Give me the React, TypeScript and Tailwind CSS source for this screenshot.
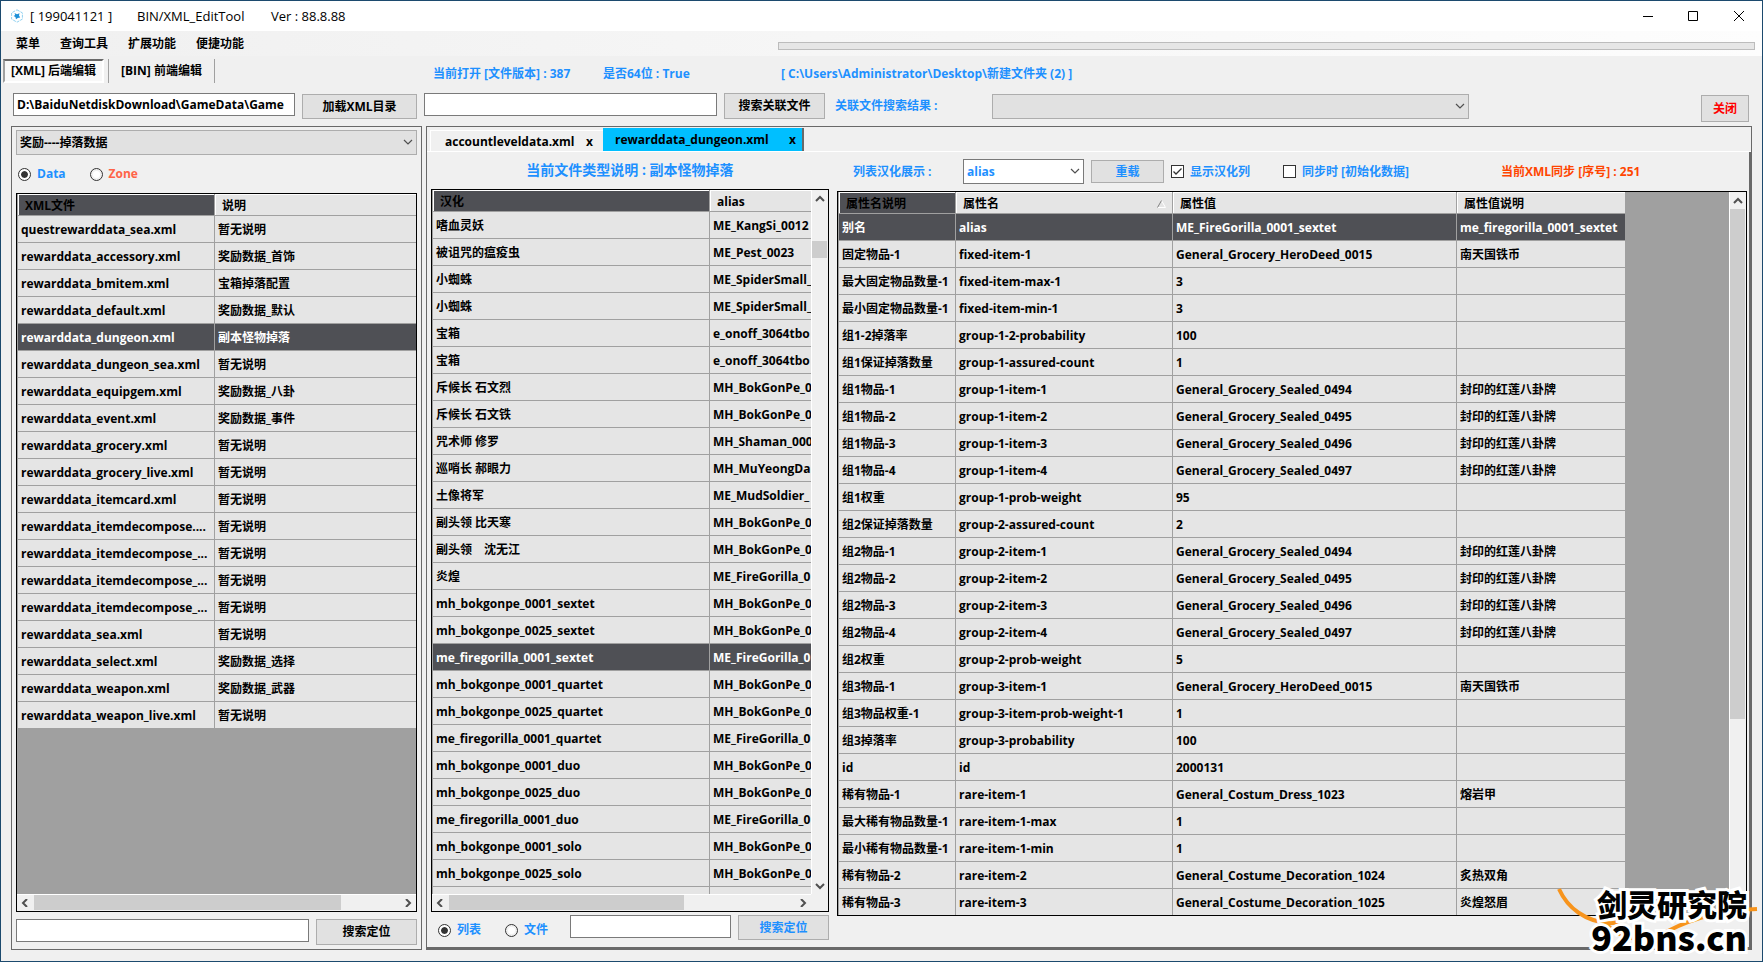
import React, { useState } from 'react';

const fileRows = [
  ['questrewarddata_sea.xml', '暂无说明'],
  ['rewarddata_accessory.xml', '奖励数据_首饰'],
  ['rewarddata_bmitem.xml', '宝箱掉落配置'],
  ['rewarddata_default.xml', '奖励数据_默认'],
  ['rewarddata_dungeon.xml', '副本怪物掉落'],
  ['rewarddata_dungeon_sea.xml', '暂无说明'],
  ['rewarddata_equipgem.xml', '奖励数据_八卦'],
  ['rewarddata_event.xml', '奖励数据_事件'],
  ['rewarddata_grocery.xml', '暂无说明'],
  ['rewarddata_grocery_live.xml', '暂无说明'],
  ['rewarddata_itemcard.xml', '暂无说明'],
  ['rewarddata_itemdecompose....', '暂无说明'],
  ['rewarddata_itemdecompose_...', '暂无说明'],
  ['rewarddata_itemdecompose_...', '暂无说明'],
  ['rewarddata_itemdecompose_...', '暂无说明'],
  ['rewarddata_sea.xml', '暂无说明'],
  ['rewarddata_select.xml', '奖励数据_选择'],
  ['rewarddata_weapon.xml', '奖励数据_武器'],
  ['rewarddata_weapon_live.xml', '暂无说明'],
];

const aliasRows = [
  ['嗜血灵妖', 'ME_KangSi_0012'],
  ['被诅咒的瘟疫虫', 'ME_Pest_0023'],
  ['小蜘蛛', 'ME_SpiderSmall_'],
  ['小蜘蛛', 'ME_SpiderSmall_'],
  ['宝箱', 'e_onoff_3064tbo'],
  ['宝箱', 'e_onoff_3064tbo'],
  ['斥候长 石文烈', 'MH_BokGonPe_0'],
  ['斥候长 石文铁', 'MH_BokGonPe_0'],
  ['咒术师 修罗', 'MH_Shaman_000'],
  ['巡哨长 郝眼力', 'MH_MuYeongDa'],
  ['土像将军', 'ME_MudSoldier_'],
  ['副头领 比天寒', 'MH_BokGonPe_0'],
  ['副头领　沈无江', 'MH_BokGonPe_0'],
  ['炎煌', 'ME_FireGorilla_0'],
  ['mh_bokgonpe_0001_sextet', 'MH_BokGonPe_0'],
  ['mh_bokgonpe_0025_sextet', 'MH_BokGonPe_0'],
  ['me_firegorilla_0001_sextet', 'ME_FireGorilla_0'],
  ['mh_bokgonpe_0001_quartet', 'MH_BokGonPe_0'],
  ['mh_bokgonpe_0025_quartet', 'MH_BokGonPe_0'],
  ['me_firegorilla_0001_quartet', 'ME_FireGorilla_0'],
  ['mh_bokgonpe_0001_duo', 'MH_BokGonPe_0'],
  ['mh_bokgonpe_0025_duo', 'MH_BokGonPe_0'],
  ['me_firegorilla_0001_duo', 'ME_FireGorilla_0'],
  ['mh_bokgonpe_0001_solo', 'MH_BokGonPe_0'],
  ['mh_bokgonpe_0025_solo', 'MH_BokGonPe_0'],
  ['', ''],
];

const attrRows = [
  ['别名', 'alias', 'ME_FireGorilla_0001_sextet', 'me_firegorilla_0001_sextet'],
  ['固定物品-1', 'fixed-item-1', 'General_Grocery_HeroDeed_0015', '南天国铁币'],
  ['最大固定物品数量-1', 'fixed-item-max-1', '3', ''],
  ['最小固定物品数量-1', 'fixed-item-min-1', '3', ''],
  ['组1-2掉落率', 'group-1-2-probability', '100', ''],
  ['组1保证掉落数量', 'group-1-assured-count', '1', ''],
  ['组1物品-1', 'group-1-item-1', 'General_Grocery_Sealed_0494', '封印的红莲八卦牌'],
  ['组1物品-2', 'group-1-item-2', 'General_Grocery_Sealed_0495', '封印的红莲八卦牌'],
  ['组1物品-3', 'group-1-item-3', 'General_Grocery_Sealed_0496', '封印的红莲八卦牌'],
  ['组1物品-4', 'group-1-item-4', 'General_Grocery_Sealed_0497', '封印的红莲八卦牌'],
  ['组1权重', 'group-1-prob-weight', '95', ''],
  ['组2保证掉落数量', 'group-2-assured-count', '2', ''],
  ['组2物品-1', 'group-2-item-1', 'General_Grocery_Sealed_0494', '封印的红莲八卦牌'],
  ['组2物品-2', 'group-2-item-2', 'General_Grocery_Sealed_0495', '封印的红莲八卦牌'],
  ['组2物品-3', 'group-2-item-3', 'General_Grocery_Sealed_0496', '封印的红莲八卦牌'],
  ['组2物品-4', 'group-2-item-4', 'General_Grocery_Sealed_0497', '封印的红莲八卦牌'],
  ['组2权重', 'group-2-prob-weight', '5', ''],
  ['组3物品-1', 'group-3-item-1', 'General_Grocery_HeroDeed_0015', '南天国铁币'],
  ['组3物品权重-1', 'group-3-item-prob-weight-1', '1', ''],
  ['组3掉落率', 'group-3-probability', '100', ''],
  ['id', 'id', '2000131', ''],
  ['稀有物品-1', 'rare-item-1', 'General_Costum_Dress_1023', '熔岩甲'],
  ['最大稀有物品数量-1', 'rare-item-1-max', '1', ''],
  ['最小稀有物品数量-1', 'rare-item-1-min', '1', ''],
  ['稀有物品-2', 'rare-item-2', 'General_Costume_Decoration_1024', '炙热双角'],
  ['稀有物品-3', 'rare-item-3', 'General_Costume_Decoration_1025', '炎煌怒眉'],
];

interface GridProps {
  label: string;
  headers: string[];
  widths: string[];
  rows: string[][];
  initial: number;
  sorted?: number;
}

const Grid: React.FC<GridProps> = ({ label, headers, widths, rows, initial, sorted }) => {
  const [selected, setSelected] = useState(initial);

  return (
    <table aria-label={label} className="w-max table-fixed border-separate border-spacing-0 border-l border-[#a0a0a0] text-left">
      <thead>
        <tr>
          {headers.map((h, i) => (
            <th
              key={h}
              className={`${widths[i]} h-[22px] border-r border-b border-[#a0a0a0] p-0 font-bold ${i === 0 ? 'bg-[#4f5055]' : 'bg-[#e5e5e5]'}`}
            >
              <div className="flex h-[21px] items-center justify-between border-t border-l border-white px-1.5 pt-0.5">
                {h}
                {sorted === i && (
                  <svg width="9" height="8" viewBox="0 0 9 8" fill="none">
                    <path d="M4.5 0.5L8.5 7.5H0.5" stroke="#fff" />
                    <path d="M4.5 0.5L0.5 7.5" stroke="#808080" />
                  </svg>
                )}
              </div>
            </th>
          ))}
        </tr>
      </thead>
      <tbody>
        {rows.map((row, r) => (
          <tr
            key={r}
            onClick={() => setSelected(r)}
            className={r === selected ? 'bg-[#4f5055] text-white' : 'bg-[#e5e5e5]'}
          >
            {row.map((cell, i) => (
              <td key={i} className="h-[27px] overflow-hidden border-r border-b border-[#a0a0a0] px-[3px] pt-0.5 pb-0 whitespace-pre">
                {cell}
              </td>
            ))}
          </tr>
        ))}
      </tbody>
    </table>
  );
};

const arrows = {
  up: 'M1 6L5 2L9 6',
  down: 'M1 2L5 6L9 2',
  left: 'M6 0L2 4L6 8',
  right: 'M3 0L7 4L3 8',
};

const Arrow: React.FC<{ dir: keyof typeof arrows }> = ({ dir }) => (
  <svg width="10" height="8" viewBox="0 0 10 8" fill="none" stroke="#505050" strokeWidth="2">
    <path d={arrows[dir]} />
  </svg>
);

const HScroll: React.FC<{ thumb: string }> = ({ thumb }) => (
  <div className="flex h-[17px] shrink-0 items-stretch border-t border-white bg-[#f0f0f0]">
    <button aria-label="向左滚动" className="flex w-[17px] shrink-0 items-center justify-center"><Arrow dir="left" /></button>
    <div className="min-w-0 flex-1">
      <div className={`${thumb} h-[15px] bg-[#cdcdcd]`} />
    </div>
    <button aria-label="向右滚动" className="flex w-[17px] shrink-0 items-center justify-center"><Arrow dir="right" /></button>
  </div>
);

interface ComboProps {
  id: string;
  label: string;
  options: string[];
  className: string;
}

const Combo: React.FC<ComboProps> = ({ id, label, options, className }) => (
  <div className="relative flex">
    <select
      id={id}
      aria-label={label}
      className={`h-[25px] w-full appearance-none rounded-none border pt-px pl-[3px] font-bold outline-none ${className}`}
    >
      {options.map(o => <option key={o}>{o}</option>)}
    </select>
    <svg className="pointer-events-none absolute top-[9px] right-1" width="10" height="7" viewBox="0 0 10 7" fill="none" stroke="#505050" strokeWidth="1.2">
      <path d="M1 1L5 5L9 1" />
    </svg>
  </div>
);

interface RadioProps {
  name: string;
  text: string;
  color: string;
  checked: boolean;
  onChange: () => void;
}

const Radio: React.FC<RadioProps> = ({ name, text, color, checked, onChange }) => (
  <label className={`flex items-center gap-1.5 ${color}`}>
    <input
      type="radio"
      name={name}
      checked={checked}
      onChange={onChange}
      className="size-[13px] appearance-none rounded-full border border-[#333] bg-white bg-clip-content p-0.5 checked:bg-[#333] checked:shadow-[inset_0_0_0_2px_#fff]"
    />
    {text}
  </label>
);

const CheckBox: React.FC<{ text: string; initial: boolean }> = ({ text, initial }) => {
  const [on, setOn] = useState(initial);
  return (
    <label className="relative flex items-center gap-1.5">
      <input
        type="checkbox"
        checked={on}
        onChange={() => setOn(!on)}
        className="size-[13px] appearance-none border border-[#333] bg-white"
      />
      {on && (
        <svg className="pointer-events-none absolute left-0.5" width="9" height="9" viewBox="0 0 9 9" fill="none" stroke="#333" strokeWidth="1.3">
          <path d="M0.5 4.5L3 7L8.5 1.5" />
        </svg>
      )}
      {text}
    </label>
  );
};

const btn = 'flex items-center justify-center border border-[#adadad] bg-[#e1e1e1] font-bold';
const box = 'h-[23px] rounded-none border border-[#7a7a7a] bg-white px-[3px] font-bold outline-none';

const App: React.FC = () => {
  const [source, setSource] = useState('Data');
  const [mode, setMode] = useState('列表');

  return (
    <div className="relative flex h-screen min-h-[600px] flex-col overflow-hidden border border-[#1c4a6e] bg-[#f0f0f0] font-['Open_Sans','Noto_Sans_CJK_SC',sans-serif] text-[12px] leading-4 font-bold text-black">
      {/* Title bar */}
      <header className="flex h-[30px] shrink-0 items-center bg-white pl-[9px] text-[13px] font-normal">
        <svg width="14" height="14" viewBox="0 0 14 14" fill="none">
          <path d="M7 0.8L12.4 3.9V10.1L7 13.2L1.6 10.1V3.9Z" stroke="#8fd0f0" strokeDasharray="3 1" />
          <path d="M4.5 4L7 5.2L9.5 4.2L9 6.6L10.2 8.4L7.8 9L6 10.2L5.4 8L3.6 7L5.2 6Z" fill="#1e90d8" />
        </svg>
        <span className="ml-1.5 w-[107px]">[ 199041121 ]</span>
        <h1 className="w-[134px]">BIN/XML_EditTool</h1>
        <span>Ver : 88.8.88</span>
        <div className="ml-auto flex h-full items-center">
          <button aria-label="最小化" className="flex h-full w-[45px] items-center justify-center">
            <svg width="10" height="10" stroke="#000"><path d="M0 5.5H10" /></svg>
          </button>
          <button aria-label="最大化" className="flex h-full w-[45px] items-center justify-center">
            <svg width="10" height="10" fill="none" stroke="#000"><path d="M0.5 0.5H9.5V9.5H0.5Z" /></svg>
          </button>
          <button aria-label="关闭窗口" className="flex h-full w-[47px] items-center justify-center">
            <svg width="10" height="10" stroke="#000"><path d="M0 0L10 10M10 0L0 10" /></svg>
          </button>
        </div>
      </header>

      {/* Menu */}
      <nav className="flex h-[25px] shrink-0 items-center bg-linear-to-r from-[#f0f0f0] to-[#fdfdfd] pr-[7px] pl-[15px]">
        <div className="flex w-[762px] shrink-0 gap-5">
          <button>菜单</button>
          <button>查询工具</button>
          <button>扩展功能</button>
          <button>便捷功能</button>
        </div>
        <div role="progressbar" aria-label="进度" className="mt-1 h-2 flex-1 border border-[#bcbcbc] bg-[#e6e6e6]" />
      </nav>

      {/* Mode switch + status */}
      <div className="flex h-[37px] shrink-0 items-start pt-[3px] pl-[2px] text-[#1e90ff]">
        <button className="h-6 w-[101px] border-2 border-t-[#696969] border-r-white border-b-white border-l-[#a0a0a0] bg-[#f8f8f8] text-black">[XML] 后端编辑</button>
        <div className="ml-1 h-6 w-px bg-[#a0a0a0]" />
        <button className="h-6 w-[105px] text-black">[BIN] 前端编辑</button>
        <div className="h-6 w-px bg-[#a0a0a0]" />
        <span className="ml-[218px] w-[170px] pt-[7px]">当前打开 [文件版本] : 387</span>
        <span className="w-[178px] pt-[7px]">是否64位 : True</span>
        <span className="pt-[7px]">[ C:\Users\Administrator\Desktop\新建文件夹 (2) ]</span>
      </div>

      <div className="flex h-[33px] shrink-0 items-start pr-[13px] pl-3">
        <input aria-label="XML目录" className={`${box} w-[282px]`} defaultValue="D:\BaiduNetdiskDownload\GameData\Game" />
        <button className={`${btn} mt-px ml-[7px] h-[25px] w-[115px]`}>加载XML目录</button>
        <input aria-label="关联文件" className={`${box} ml-[7px] w-[293px]`} />
        <button className={`${btn} ml-[7px] h-[26px] w-[101px]`}>搜索关联文件</button>
        <label htmlFor="related" className="ml-[10px] w-[157px] pt-[5px] text-[#1e90ff]">关联文件搜索结果 :</label>
        <div className="mt-px w-[477px]">
          <Combo id="related" label="关联文件搜索结果" options={[]} className="border-[#adadad] bg-[#e1e1e1]" />
        </div>
        <button className={`${btn} mt-0.5 ml-auto h-[27px] w-[48px] text-[#ff0000]`}>关闭</button>
      </div>

      <main className="flex min-h-0 flex-1 gap-1 pr-[10px] pb-[11px] pl-[10px]">
        {/* File list */}
        <section className="flex w-[411px] shrink-0 flex-col border border-[#696969] px-1 pt-[3px] pb-1">
          <Combo id="category" label="分类" options={['奖励----掉落数据']} className="border-[#adadad] bg-[#e1e1e1]" />
          <div className="flex h-[38px] items-center gap-6 pl-0.5">
            <Radio name="source" text="Data" color="text-[#1e90ff]" checked={source === 'Data'} onChange={() => setSource('Data')} />
            <Radio name="source" text="Zone" color="text-[#ff6347]" checked={source === 'Zone'} onChange={() => setSource('Zone')} />
          </div>
          <div className="flex min-h-0 flex-1 flex-col border border-black bg-[#a0a0a0]">
            <div className="min-h-0 flex-1 overflow-hidden">
              <Grid label="XML文件" headers={['XML文件', '说明']} widths={['w-[197px]', 'w-[300px]']} rows={fileRows} initial={4} />
            </div>
            <HScroll thumb="w-[84%]" />
          </div>
          <div className="mt-[7px] flex items-start justify-between">
            <input aria-label="搜索文件" className={`${box} w-[293px]`} />
            <button className={`${btn} h-[26px] w-[101px]`}>搜索定位</button>
          </div>
        </section>

        {/* Open files */}
        <section className="flex min-w-0 flex-1 flex-col border border-[#696969]">
          <div className="flex h-[25px] shrink-0 items-end border-b border-white pl-[3px]">
            <div className="flex h-[21px] w-[173px] items-center justify-between border-t border-l border-white pt-0.5 pr-[10px] pl-[14px]">
              <button>accountleveldata.xml</button>
              <button aria-label="关闭 accountleveldata.xml">x</button>
            </div>
            <div className="flex h-[23px] w-[201px] items-center justify-between border-r-2 border-[#696969] bg-[#00bfff] pr-1.5 pl-3">
              <button>rewarddata_dungeon.xml</button>
              <button aria-label="关闭 rewarddata_dungeon.xml">x</button>
            </div>
          </div>

          <div className="flex min-h-0 flex-1 border-r-2 border-b-2 border-[#696969] pr-0.5 pl-1">
            <div className="flex w-[398px] shrink-0 flex-col pb-1.5">
              <h2 className="flex h-[37px] shrink-0 items-center justify-center pb-0.5 text-[14px] text-[#1e90ff]">当前文件类型说明 : 副本怪物掉落</h2>
              <div className="flex min-h-0 flex-1 flex-col border border-black bg-[#f0f0f0]">
                <div className="flex min-h-0 flex-1">
                  <div className="min-w-0 flex-1 overflow-hidden">
                    <Grid label="汉化" headers={['汉化', 'alias']} widths={['w-[277px]', 'w-[200px]']} rows={aliasRows} initial={16} />
                  </div>
                  <div className="flex w-[17px] shrink-0 flex-col items-center border-l border-white">
                    <button aria-label="向上滚动" className="flex h-[17px] items-center"><Arrow dir="up" /></button>
                    <div className="w-full flex-1 pt-[34px]">
                      <div className="h-[17px] w-[15px] bg-[#cdcdcd]" />
                    </div>
                    <button aria-label="向下滚动" className="flex h-[17px] items-center"><Arrow dir="down" /></button>
                  </div>
                </div>
                <div className="pr-[17px]">
                  <HScroll thumb="w-[68%]" />
                </div>
              </div>
              <div className="mt-[3px] flex h-[26px] shrink-0 items-start">
                <div className="flex h-[30px] w-[139px] items-center gap-6 pl-[7px]">
                  <Radio name="mode" text="列表" color="text-[#1e90ff]" checked={mode === '列表'} onChange={() => setMode('列表')} />
                  <Radio name="mode" text="文件" color="text-[#1e90ff]" checked={mode === '文件'} onChange={() => setMode('文件')} />
                </div>
                <input aria-label="搜索别名" className={`${box} w-[161px]`} />
                <button className={`${btn} ml-auto h-[25px] w-[91px] text-[#1e90ff]`}>搜索定位</button>
              </div>
            </div>

            <div className="ml-2 flex min-w-0 flex-1 flex-col pb-[31px]">
              <div className="flex h-[39px] shrink-0 items-center pl-4 text-[#1e90ff]">
                <label htmlFor="column" className="w-[110px]">列表汉化展示 :</label>
                <div className="w-[121px]">
                  <Combo id="column" label="列表汉化展示" options={['alias']} className="border-[#7a7a7a] bg-white text-[#1e90ff]" />
                </div>
                <button className={`${btn} mr-[7px] ml-[7px] h-[23px] w-[73px]`}>重载</button>
                <div className="w-[112px]"><CheckBox text="显示汉化列" initial={true} /></div>
                <div className="w-[218px]"><CheckBox text="同步时 [初始化数据]" initial={false} /></div>
                <span className="text-[#ff4500]">当前XML同步 [序号] : 251</span>
              </div>
              <div className="flex min-h-0 flex-1 border border-black bg-[#a0a0a0]">
                <div className="min-w-0 flex-1 overflow-hidden">
                  <Grid
                    label="属性"
                    headers={['属性名说明', '属性名', '属性值', '属性值说明']}
                    widths={['w-[117px]', 'w-[217px]', 'w-[284px]', 'w-[169px]']}
                    rows={attrRows}
                    initial={0}
                    sorted={1}
                  />
                </div>
                <div className="flex w-[17px] shrink-0 flex-col items-center border-l border-white bg-[#f0f0f0]">
                  <button aria-label="向上滚动" className="flex h-[17px] items-center"><Arrow dir="up" /></button>
                  <div className="w-full flex-1">
                    <div className="h-[74%] w-[15px] bg-[#cdcdcd]" />
                  </div>
                  <div className="h-[17px]" />
                </div>
              </div>
            </div>
          </div>
        </section>
      </main>

      {/* Site mark over the lower right corner */}
      <div className="pointer-events-none absolute right-0 bottom-1">
        <svg width="206" height="70" viewBox="0 0 206 70" fill="none" stroke="#f7941d" strokeWidth="4">
          <path d="M3 2C12 22 30 34 52 36Q62 37 68 31" />
          <path d="M50 36Q58 48 80 52Q96 54 112 44Q150 24 201 22" />
        </svg>
        <div className="absolute right-[15px] bottom-0.5 text-right font-['Noto_Sans_CJK_SC',sans-serif] font-black [-webkit-text-stroke:6px_white] [paint-order:stroke_fill]">
          <div className="text-[30px] leading-8">剑灵研究院</div>
          <div className="text-[34px] leading-9">92bns.cn</div>
        </div>
      </div>
    </div>
  );
};

export default App;
